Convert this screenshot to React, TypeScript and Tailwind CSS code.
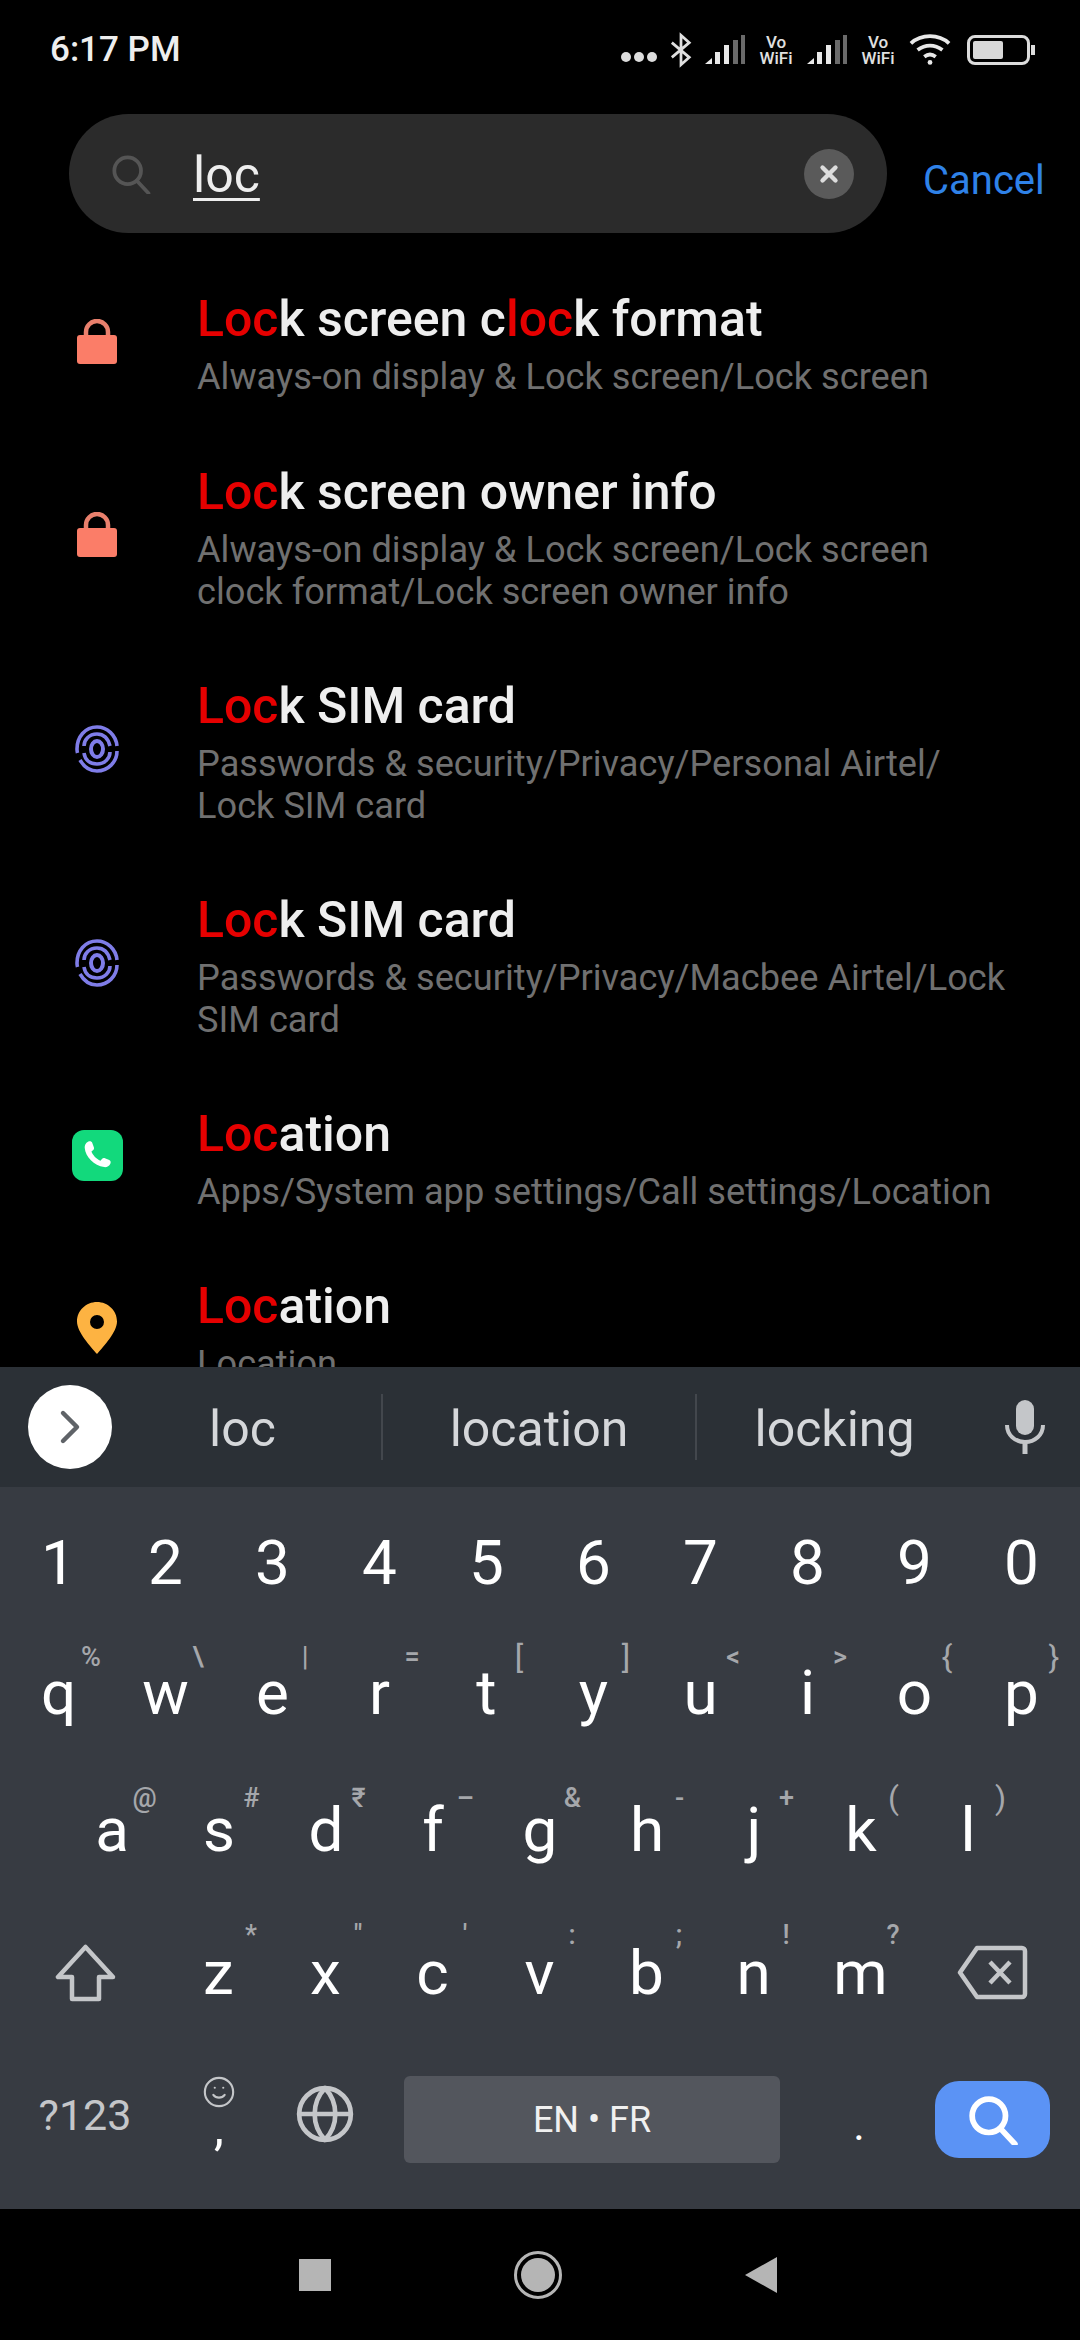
import { X, ChevronRight, Smile, Globe } from "lucide-react";
import type { ReactNode } from "react";

const SearchGlyph = ({ size, color, width }: { size: number; color: string; width: number }) => (
  <svg width={size} height={size} viewBox="0 0 48 48" fill="none" stroke={color} strokeWidth={width} className="block shrink-0">
    <circle cx="20" cy="20" r="16" />
    <path d="M31 32l14 15" strokeLinecap="round" />
  </svg>
);

const LockIcon = () => (
  <svg width="40" height="45" viewBox="0 0 40 45" className="block">
    <path d="M9 18V13a11 11 0 0 1 22 0v5" fill="none" stroke="#e9806d" strokeWidth="4.5" />
    <rect x="0" y="16" width="40" height="29" rx="3" fill="#fb7d68" />
  </svg>
);

const FingerprintIcon = () => (
  <svg width="44" height="48" viewBox="0 0 44 48" fill="none" stroke="#7f7de8" strokeWidth="3.6" className="block">
    <path d="M42 21C41 10 32 2 22 2 10 2 2 12 2 24c0 2 .2 3 .5 4M5 35c4 7 10 11 17 11 11 0 20-9 20-20" />
    <path d="M35 21C33 13 28 9 22 9 14 9 9 15 9 21M9 28c1 7 6 11 13 11 8 0 13-6 13-12" />
    <ellipse cx="22" cy="24" rx="6" ry="8" strokeWidth="4" />
  </svg>
);

const PhoneIcon = () => (
  <div className="w-[51px] h-[51px] rounded-[12px] bg-[#12d97c] flex items-center justify-center">
    <svg width="36" height="36" viewBox="0 0 24 24" fill="#ffffff">
      <path d="M6 2.500c1.300-.6 2.400-.3 2.800.7l1.100 3c.3.800 0 1.500-.6 2L8.300 9c.9 2.500 3.300 5 6 6.200l1-1.200c.5-.6 1.300-.8 2-.5l2.900 1.200c.9.4 1.200 1.500.7 2.400-.8 1.600-2.300 2.500-4.100 2.300C10 18.400 4.300 12.600 3.800 6.500 3.700 4.800 4.500 3.300 6 2.500z" />
    </svg>
  </div>
);

const PinIcon = () => (
  <svg width="40" height="52" viewBox="0 0 40 52" className="block">
    <path
      fillRule="evenodd"
      d="M20 0c11 0 20 8.500 20 19.500C40 30 27 44 20 52 13 44 0 30 0 19.500 0 8.500 9 0 20 0zm0 13a7 7 0 1 0 0 14 7 7 0 0 0 0-14z"
      fill="#fdb342"
    />
  </svg>
);

const MicIcon = () => (
  <svg width="40" height="54" viewBox="0 0 40 54" fill="none" className="block">
    <rect x="11" y="0" width="18" height="35" rx="9" fill="#c4c6c9" />
    <path d="M2 25c0 10 8 17 18 17s18-7 18-17" stroke="#c4c6c9" strokeWidth="4" />
    <path d="M20 42v12" stroke="#c4c6c9" strokeWidth="5" />
  </svg>
);

type Row = { icon: ReactNode; title: ReactNode; lines: string[]; height: string };

const red = (s: string) => <span className="text-[#e60000]">{s}</span>;

const rows: Row[] = [
  {
    icon: <LockIcon />,
    title: (
      <>
        {red("Loc")}k screen c{red("loc")}k format
      </>
    ),
    lines: ["Always-on display & Lock screen/Lock screen"],
    height: "h-[173px]",
  },
  {
    icon: <LockIcon />,
    title: <>{red("Loc")}k screen owner info</>,
    lines: ["Always-on display & Lock screen/Lock screen", "clock format/Lock screen owner info"],
    height: "h-[214px]",
  },
  {
    icon: <FingerprintIcon />,
    title: <>{red("Loc")}k SIM card</>,
    lines: ["Passwords & security/Privacy/Personal Airtel/", "Lock SIM card"],
    height: "h-[214px]",
  },
  {
    icon: <FingerprintIcon />,
    title: <>{red("Loc")}k SIM card</>,
    lines: ["Passwords & security/Privacy/Macbee Airtel/Lock", "SIM card"],
    height: "h-[214px]",
  },
  {
    icon: <PhoneIcon />,
    title: <>{red("Loc")}ation</>,
    lines: ["Apps/System app settings/Call settings/Location"],
    height: "h-[172px]",
  },
  {
    icon: <PinIcon />,
    title: <>{red("Loc")}ation</>,
    lines: ["Location"],
    height: "h-[172px]",
  },
];

const digits = ["1", "2", "3", "4", "5", "6", "7", "8", "9", "0"];
const qwerty = [
  ["q", "%"],
  ["w", "\\"],
  ["e", "|"],
  ["r", "="],
  ["t", "["],
  ["y", "]"],
  ["u", "<"],
  ["i", ">"],
  ["o", "{"],
  ["p", "}"],
];
const asdf = [
  ["a", "@"],
  ["s", "#"],
  ["d", "₹"],
  ["f", "–"],
  ["g", "&"],
  ["h", "-"],
  ["j", "+"],
  ["k", "("],
  ["l", ")"],
];
const zxcv = [
  ["z", "*"],
  ["x", '"'],
  ["c", "'"],
  ["v", ":"],
  ["b", ";"],
  ["n", "!"],
  ["m", "?"],
];

const Key = ({ label, hint, hintY }: { label: string; hint?: string; hintY?: string }) => (
  <div className="relative w-[107px] h-full flex items-center justify-center text-[62px] leading-none text-white">
    {label}
    {hint && (
      <span
        className={`absolute left-[86px] -translate-x-1/2 -translate-y-1/2 leading-none text-[#a5a7ab] ${hintY} ${
          "[]{}()".includes(hint) ? "text-[32px]" : "text-[27px] font-medium"
        }`}
      >
        {hint}
      </span>
    )}
  </div>
);

const SignalBars = () => (
  <svg width="40" height="30" viewBox="0 0 40 30" className="block">
    <path d="M0 29l7-6v6z" fill="#e8e8e8" />
    <rect x="10" y="17" width="5" height="12" fill="#e8e8e8" />
    <rect x="19" y="10" width="5" height="19" fill="#e8e8e8" />
    <rect x="28" y="5" width="5" height="24" fill="#6a6a6a" />
    <rect x="36" y="0" width="4" height="29" fill="#6a6a6a" />
  </svg>
);

const VoWifi = () => (
  <div className="flex flex-col items-center text-[17px] leading-[16px] font-medium text-[#e0e0e0] w-[36px]">
    <span>Vo</span>
    <span>WiFi</span>
  </div>
);

export default function App() {
  return (
    <div className="w-[1080px] h-[2340px] bg-black flex flex-col overflow-hidden font-['Roboto',sans-serif]">
      {/* status bar */}
      <div className="h-[100px] flex items-center justify-between pl-[50px] pr-[45px] shrink-0">
        <span className="text-[35px] font-medium text-[#eeeeee]">6:17 PM</span>
        <div className="flex items-center gap-[13px]">
          <div className="flex gap-[3px] items-center mt-[14px]">
            <span className="w-[10px] h-[10px] rounded-full bg-[#dddddd]" />
            <span className="w-[10px] h-[10px] rounded-full bg-[#dddddd]" />
            <span className="w-[10px] h-[10px] rounded-full bg-[#dddddd]" />
          </div>
          <svg width="22" height="36" viewBox="0 0 24 36" fill="none" stroke="#e0e0e0" strokeWidth="3">
            <path d="M2 10l19 16-9 8V2l9 8L2 26" />
          </svg>
          <SignalBars />
          <VoWifi />
          <SignalBars />
          <VoWifi />
          <svg width="42" height="34" viewBox="0 0 44 34" fill="none" stroke="#e8e8e8" strokeWidth="4">
            <path d="M2 10c11-10 29-10 40 0" />
            <path d="M9 17c8-6 18-6 26 0" />
            <path d="M16 24c4-3 8-3 12 0" />
            <circle cx="22" cy="30" r="2.500" fill="#e8e8e8" stroke="none" />
          </svg>
          <div className="flex items-center gap-[1px] ml-[3px]">
            <div className="w-[63px] h-[30px] rounded-[8px] border-[3px] border-[#dcdcdc] p-[3px]">
              <div className="w-[30px] h-full bg-[#d8d8d8] rounded-[2px]" />
            </div>
            <div className="w-[4px] h-[10px] bg-[#dcdcdc]" />
          </div>
        </div>
      </div>

      {/* search */}
      <div className="h-[148px] shrink-0 flex items-start pt-[14px] pl-[69px]">
        <div className="w-[818px] h-[119px] rounded-full bg-[#2b2b2b] flex items-center pl-[42px] pr-[33px]">
          <SearchGlyph size={40} color="#555555" width={4.5} />
          <span className="ml-[42px] mt-[2px] text-[50px] leading-[56px] text-[#eeeeee] underline underline-offset-[6px] decoration-[3px]">
            loc
          </span>
          <div className="ml-auto w-[50px] h-[50px] rounded-full bg-[#5a5a5a] flex items-center justify-center">
            <X size={26} strokeWidth={4} className="text-[#dddddd]" />
          </div>
        </div>
        <span className="ml-[36px] mt-[37px] text-[40px] leading-[60px] text-[#2f82e8]">Cancel</span>
      </div>

      {/* results */}
      <div className="flex-1 min-h-0 overflow-hidden pt-[25px]">
        {rows.map((row, i) => (
          <div key={i} className={`flex shrink-0 ${row.height}`}>
            <div className="w-[197px] flex justify-center shrink-0 pr-[3px] items-center">
              <div className="-mt-[37px]">{row.icon}</div>
            </div>
            <div className="pt-[18px]">
              <div className="text-[50px] leading-[56px] font-medium text-[#eeeeee]">{row.title}</div>
              <div className="mt-[9px] text-[36.2px] leading-[42px] text-[#707070]">
                {row.lines.map((l) => (
                  <div key={l}>{l}</div>
                ))}
              </div>
            </div>
          </div>
        ))}
      </div>

      {/* keyboard */}
      <div className="h-[842px] shrink-0 bg-[#373b42] flex flex-col">
        <div className="h-[120px] bg-[#2b3036] flex items-center shrink-0 text-[#d5d7da] text-[50px]">
          <div className="ml-[28px] w-[84px] h-[84px] rounded-full bg-white flex items-center justify-center shrink-0">
            <ChevronRight size={56} strokeWidth={1.9} className="text-[#5f6368]" />
          </div>
          <div className="w-[261px] text-center pt-[4px]">loc</div>
          <div className="w-[2px] h-[66px] ml-[8px] bg-[#43474d]" />
          <div className="w-[312px] text-center pt-[4px]">location</div>
          <div className="w-[2px] h-[66px] bg-[#43474d]" />
          <div className="w-[275px] text-center pt-[4px]">locking</div>
          <div className="ml-[33px]">
            <MicIcon />
          </div>
        </div>
        <div className="flex pl-[5px] h-[140px] mt-[6px] shrink-0">
          {digits.map((d) => (
            <Key key={d} label={d} />
          ))}
        </div>
        <div className="flex pl-[5px] h-[120px] shrink-0">
          {qwerty.map(([k, h]) => (
            <Key key={k} label={k} hint={h} hintY="top-[calc(50%-36px)]" />
          ))}
        </div>
        <div className="flex justify-center h-[154px] shrink-0">
          {asdf.map(([k, h]) => (
            <Key key={k} label={k} hint={h} hintY="top-[calc(50%-32px)]" />
          ))}
        </div>
        <div className="flex items-center h-[132px] shrink-0">
          <div className="w-[165px] flex justify-center pl-[5px]">
            <svg width="61" height="58" viewBox="0 0 61 58" fill="none" stroke="#c4c6c9" strokeWidth="4.500">
              <path d="M30.500 3L3 33h14v22h27V33h14z" strokeLinejoin="round" />
            </svg>
          </div>
          <div className="flex h-full">
            {zxcv.map(([k, h]) => (
              <Key key={k} label={k} hint={h} hintY="top-[calc(50%-38px)]" />
            ))}
          </div>
          <div className="flex-1 flex justify-center pr-[10px] -mt-[2px]">
            <svg width="71" height="55" viewBox="0 0 71 55" fill="none" stroke="#c4c6c9" strokeWidth="4.500">
              <path d="M20 3h45a3 3 0 0 1 3 3v43a3 3 0 0 1-3 3H20L3 27.500z" strokeLinejoin="round" />
              <path d="M33 17l20 21M53 17L33 38" />
            </svg>
          </div>
        </div>
        <div className="flex items-center h-[170px] pb-[9px] shrink-0">
          <div className="w-[170px] -mt-[9px] text-center text-[43px] text-[#c4c6c9]">?123</div>
          <div className="w-[98px] -mt-[16px] flex flex-col items-center text-[#c4c6c9]">
            <Smile size={34} strokeWidth={1.5} />
            <span className="text-[50px] leading-[44px] -mt-[4px] text-white">,</span>
          </div>
          <div className="w-[113px] -mt-[12px] flex justify-center">
            <Globe size={62} strokeWidth={1.8} className="text-[#c4c6c9]" />
          </div>
          <div className="w-[376px] h-[87px] ml-[23px] rounded-[6px] bg-[#53565d] flex items-center justify-center text-[36px] text-[#f0f0f0]">
            EN • FR
          </div>
          <div className="w-[158px] text-center text-[44px] text-white mt-[10px]">.</div>
          <div className="w-[115px] h-[77px] -ml-[3px] rounded-[24px] bg-[#5b93f5] flex items-center justify-center">
            <SearchGlyph size={50} color="#ffffff" width={5.5} />
          </div>
        </div>
      </div>

      {/* nav bar */}
      <div className="h-[131px] shrink-0 flex items-center justify-center">
        <div className="flex items-center gap-[183px] -ml-[4px]">
          <div className="w-[32px] h-[32px] bg-[#b5b5b5]" />
          <div className="w-[48px] h-[48px] rounded-full border-[3px] border-[#b5b5b5] flex items-center justify-center">
            <div className="w-[34px] h-[34px] rounded-full bg-[#b5b5b5]" />
          </div>
          <svg width="32" height="36" viewBox="0 0 32 36">
            <path d="M32 0v36L0 18z" fill="#b5b5b5" />
          </svg>
        </div>
      </div>
    </div>
  );
}
